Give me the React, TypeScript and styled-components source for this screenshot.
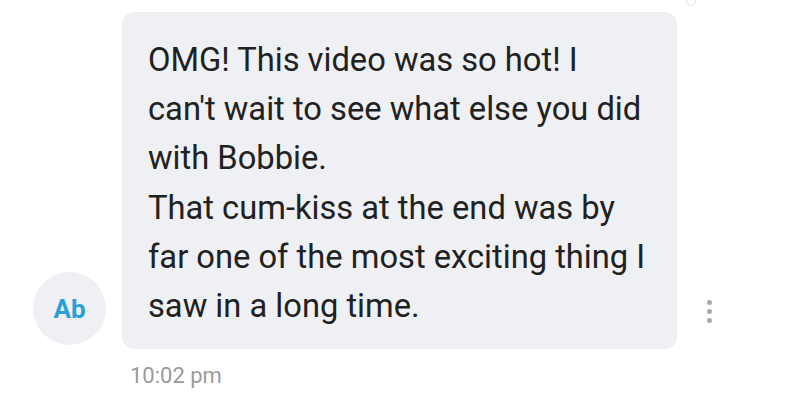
import React from "react";
import styled, { createGlobalStyle } from "styled-components";

const GlobalStyle = createGlobalStyle`
  html, body {
    margin: 0;
    padding: 0;
    background: #ffffff;
    font-family: Roboto, "Noto Sans", "Liberation Sans", sans-serif;
  }
`;

const Screen = styled.div`
  width: 800px;
  height: 409px;
  overflow: hidden;
  position: relative;
  background: #ffffff;
`;

const TopMark = styled.div`
  position: absolute;
  top: -4px;
  left: 686px;
  width: 8px;
  height: 8px;
  border-radius: 50%;
  border: 1px solid #e2e2e2;
`;

const MessageRow = styled.div`
  display: flex;
  align-items: flex-end;
  padding: 12px 0 0 33px;
`;

const Avatar = styled.div`
  width: 73px;
  height: 73px;
  border-radius: 50%;
  background: #eef0f3;
  display: flex;
  align-items: center;
  justify-content: center;
  color: #2a9fd8;
  font-weight: 700;
  font-size: 26px;
  margin-bottom: 4px;
  flex-shrink: 0;
`;

const Bubble = styled.div`
  margin-left: 16px;
  width: 519px;
  padding: 24px 10px 18px 26px;
  background: #eef0f3;
  border-radius: 12px;
  color: #212121;
  font-size: 32.7px;
  line-height: 49.2px;
`;

const Line = styled.div`
  white-space: nowrap;
`;

const More = styled.div`
  display: flex;
  flex-direction: column;
  gap: 4px;
  margin-left: 30px;
  margin-bottom: 26px;
`;

const Dot = styled.span`
  width: 5px;
  height: 5px;
  border-radius: 50%;
  background: #a9a9a9;
`;

const Time = styled.div`
  padding: 14px 0 0 130px;
  color: #9a9a9a;
  font-size: 22px;
`;

const lines = [
  "OMG! This video was so hot! I",
  "can't wait to see what else you did",
  "with Bobbie.",
  "That cum-kiss at the end was by",
  "far one of the most exciting thing I",
  "saw in a long time.",
];

export default function App() {
  return (
    <>
      <GlobalStyle />
      <Screen>
        <TopMark />
        <MessageRow>
          <Avatar>Ab</Avatar>
          <Bubble>
            {lines.map((l, i) => (
              <Line key={i}>{l}</Line>
            ))}
          </Bubble>
          <More>
            <Dot />
            <Dot />
            <Dot />
          </More>
        </MessageRow>
        <Time>10:02 pm</Time>
      </Screen>
    </>
  );
}
